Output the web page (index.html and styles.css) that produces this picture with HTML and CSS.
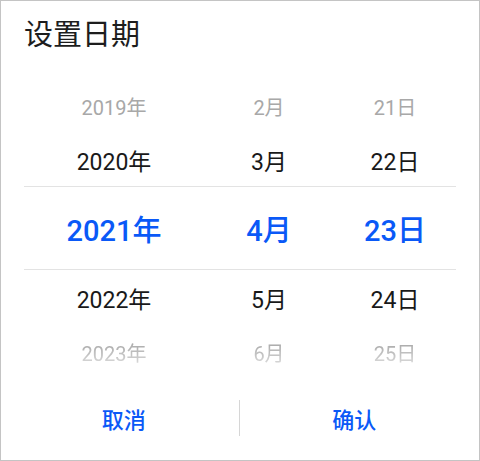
FILE: index.html
```html
<!DOCTYPE html>
<html lang="zh">
<head>
<meta charset="utf-8">
<link rel="stylesheet" href="styles.css">
</head>
<body>
<div class="dialog">
  <div class="title">设置日期</div>
  <div class="picker">
    <div class="band"></div>
    <div class="col col-year">
      <div class="item faded top">2019年</div>
      <div class="item">2020年</div>
      <div class="item selected">2021年</div>
      <div class="item">2022年</div>
      <div class="item faded bottom">2023年</div>
    </div>
    <div class="col col-month">
      <div class="item faded top">2月</div>
      <div class="item">3月</div>
      <div class="item selected">4月</div>
      <div class="item">5月</div>
      <div class="item faded bottom">6月</div>
    </div>
    <div class="col col-day">
      <div class="item faded top">21日</div>
      <div class="item">22日</div>
      <div class="item selected">23日</div>
      <div class="item">24日</div>
      <div class="item faded bottom">25日</div>
    </div>
  </div>
  <div class="footer">
    <div class="btn">取消</div>
    <div class="sep"></div>
    <div class="btn">确认</div>
  </div>
</div>
</body>
</html>
```

FILE: styles.css
```css
* { box-sizing: border-box; }
html, body { margin: 0; padding: 0; background: #fff; }
body {
  font-family: Roboto, "Noto Sans CJK SC", sans-serif;
  width: 480px;
  height: 461px;
}
.dialog {
  width: 480px;
  height: 461px;
  border: 1px solid #c4c4c4;
  background: #fff;
  display: flex;
  flex-direction: column;
}
.title {
  height: 77px;
  padding: 12px 0 0 23px;
  font-size: 29px;
  line-height: 38px;
  color: #1d1d1d;
  font-family: "Noto Sans CJK SC", sans-serif;
}
.picker {
  position: relative;
  margin: 0 23px;
  display: grid;
  grid-template-columns: 180px 130px 122px;
}
.band {
  position: absolute;
  left: 0;
  right: 0;
  top: 108px;
  height: 84px;
  border-top: 1px solid #e3e3e3;
  border-bottom: 1px solid #e3e3e3;
  pointer-events: none;
}
.col {
  display: flex;
  flex-direction: column;
  align-items: center;
}
.item {
  height: 54px;
  display: flex;
  align-items: center;
  justify-content: center;
  font-size: 23px;
  color: #191919;
  padding-top: 2px;
}
.item.selected {
  height: 84px;
  font-size: 29px;
  font-weight: 500;
  color: #0a59f7;
  padding-top: 0;
}
.item.faded {
  font-size: 20px;
  color: #a8a8a8;
}
.item.bottom {
  -webkit-mask-image: linear-gradient(to bottom, #000 35%, rgba(0,0,0,0.35) 80%);
  mask-image: linear-gradient(to bottom, #000 35%, rgba(0,0,0,0.35) 80%);
}
.footer {
  flex: 1;
  display: flex;
  align-items: center;
  padding: 0 10px 2px 8px;
}
.btn {
  flex: 1;
  text-align: center;
  font-size: 22px;
  font-weight: 500;
  color: #0a59f7;
  font-family: "Noto Sans CJK SC", sans-serif;
  line-height: 36px;
}
.sep {
  width: 1px;
  height: 36px;
  background: #d6d6d6;
}
```
